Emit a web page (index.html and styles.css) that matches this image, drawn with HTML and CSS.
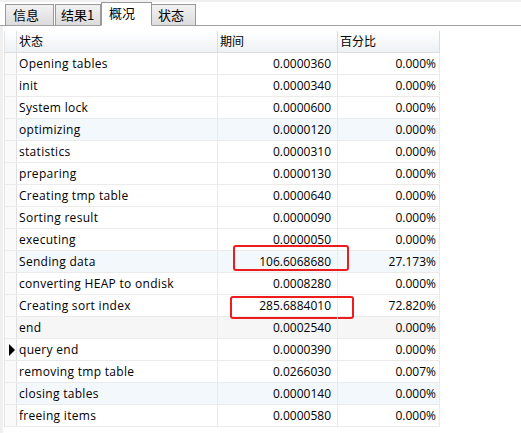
FILE: index.html
```html
<!DOCTYPE html>
<html>
<head>
<meta charset="utf-8">
<link rel="stylesheet" href="styles.css">
</head>
<body>
<div class="tabs">
  <div class="tab">信息</div>
  <div class="tab">结果1</div>
  <div class="tab active">概况</div>
  <div class="tab">状态</div>
</div>
<div class="area">
  <div class="grid">
    <div class="row head"><div class="ind"></div><div class="c1">状态</div><div class="c2">期间</div><div class="c3">百分比</div></div>
    <div class="row"><div class="ind"></div><div class="c1">Opening tables</div><div class="c2">0.0000360</div><div class="c3">0.000%</div></div>
    <div class="row"><div class="ind"></div><div class="c1">init</div><div class="c2">0.0000340</div><div class="c3">0.000%</div></div>
    <div class="row"><div class="ind"></div><div class="c1">System lock</div><div class="c2">0.0000600</div><div class="c3">0.000%</div></div>
    <div class="row alt"><div class="ind"></div><div class="c1">optimizing</div><div class="c2">0.0000120</div><div class="c3">0.000%</div></div>
    <div class="row"><div class="ind"></div><div class="c1">statistics</div><div class="c2">0.0000310</div><div class="c3">0.000%</div></div>
    <div class="row"><div class="ind"></div><div class="c1">preparing</div><div class="c2">0.0000130</div><div class="c3">0.000%</div></div>
    <div class="row"><div class="ind"></div><div class="c1">Creating tmp table</div><div class="c2">0.0000640</div><div class="c3">0.000%</div></div>
    <div class="row"><div class="ind"></div><div class="c1">Sorting result</div><div class="c2">0.0000090</div><div class="c3">0.000%</div></div>
    <div class="row"><div class="ind"></div><div class="c1">executing</div><div class="c2">0.0000050</div><div class="c3">0.000%</div></div>
    <div class="row alt"><div class="ind"></div><div class="c1">Sending data</div><div class="c2">106.6068680<span class="mark m1"></span></div><div class="c3">27.173%</div></div>
    <div class="row"><div class="ind"></div><div class="c1">converting HEAP to ondisk</div><div class="c2">0.0008280</div><div class="c3">0.000%</div></div>
    <div class="row"><div class="ind"></div><div class="c1">Creating sort index</div><div class="c2">285.6884010<span class="mark m2"></span></div><div class="c3">72.820%</div></div>
    <div class="row gray"><div class="ind"></div><div class="c1">end</div><div class="c2">0.0002540</div><div class="c3">0.000%</div></div>
    <div class="row"><div class="ind"><span class="arrow"></span></div><div class="c1">query end</div><div class="c2">0.0000390</div><div class="c3">0.000%</div></div>
    <div class="row"><div class="ind"></div><div class="c1">removing tmp table</div><div class="c2">0.0266030</div><div class="c3">0.007%</div></div>
    <div class="row alt"><div class="ind"></div><div class="c1">closing tables</div><div class="c2">0.0000140</div><div class="c3">0.000%</div></div>
    <div class="row"><div class="ind"></div><div class="c1">freeing items</div><div class="c2">0.0000580</div><div class="c3">0.000%</div></div>
  </div>
</div>
</body>
</html>
```
FILE: styles.css
```css
* { box-sizing: border-box; }
html, body { margin: 0; padding: 0; background: #ffffff; }
body {
  width: 521px; height: 433px; overflow: hidden;
  font-family: "Open Sans", "Noto Sans CJK SC", sans-serif;
  font-size: 12px; color: #000;
}
.tabs {
  height: 26px;
  display: flex; align-items: flex-end;
  padding-left: 5px;
  border-top: 2px solid #f0f0f0;
  border-bottom: 1px solid #a0a0a0;
}
.tab {
  height: 22px;
  margin-bottom: -1px;
  border: 1px solid #9a9a9a;
  border-bottom: 1px solid #a0a0a0;
  background: linear-gradient(#f2f2f2, #dcdcdc);
  padding: 0 0 0 7px;
  line-height: 19px;
  font-size: 13px;
  font-family: "Noto Sans CJK SC", sans-serif;
  white-space: nowrap;
  margin-right: 1px;
}
.tab:nth-child(1) { width: 49px; }
.tab:nth-child(2) { width: 46px; margin-right: 0; padding-left: 5px; }
.tab.active {
  height: 24px;
  width: 51px;
  background: #ffffff;
  border-bottom-color: #ffffff;
  line-height: 19px;
  padding-left: 7px;
  margin-right: 0;
}
.tab:nth-child(4) { width: 44px; border-left: none; padding-left: 6px; }
.area {
  padding: 5px 0 0 4px;
  background: linear-gradient(90deg, #f0f0f0 0, #f0f0f0 3px, #ffffff 3px);
  height: 407px;
}
.grid { width: 436px; border-left: 1px solid #e4e4e4; }
.row {
  display: flex; height: 22px;
  border-bottom: 1px solid #ebebeb;
  background: #ffffff;
}
.row.head {
  height: 22px;
  background: linear-gradient(#ffffff, #eef1f5);
  border-bottom: 1px solid #dcdcdc;
  font-family: "Noto Sans CJK SC", sans-serif;
}
.row.head > div { line-height: 19px; }
.row.alt { background: #f3f8fd; }
.row.gray { background: #f6f6f6; }
.row > div { line-height: 21px; white-space: nowrap; }
.ind { width: 12px; border-right: 1px solid #e0e0e0; background: #fafafa; position: relative; }
.head .ind { background: transparent; }
.c1 { width: 201px; padding-left: 2px; border-right: 1px solid #ebebeb; letter-spacing: 0.3px; }
.c2 { width: 120px; text-align: right; padding-right: 6px; border-right: 1px solid #ebebeb; position: relative; }
.c3 { width: 102px; text-align: right; padding-right: 3px; border-right: 1px solid #ebebeb; }
.head .c1, .head .c2, .head .c3 { text-align: left; padding-left: 2px; border-right-color: #dcdcdc; letter-spacing: 0; }
.mark {
  position: absolute;
  border: 2px solid #ee1c1c;
  border-radius: 3px;
}
.m1 { left: 15px; top: -6px; width: 116px; height: 26px; }
.m2 { left: 12px; top: 1px; width: 124px; height: 23px; }
.arrow {
  position: absolute; left: 4px; top: 5px;
  width: 0; height: 0;
  border-top: 6px solid transparent;
  border-bottom: 6px solid transparent;
  border-left: 6px solid #000;
}
```
